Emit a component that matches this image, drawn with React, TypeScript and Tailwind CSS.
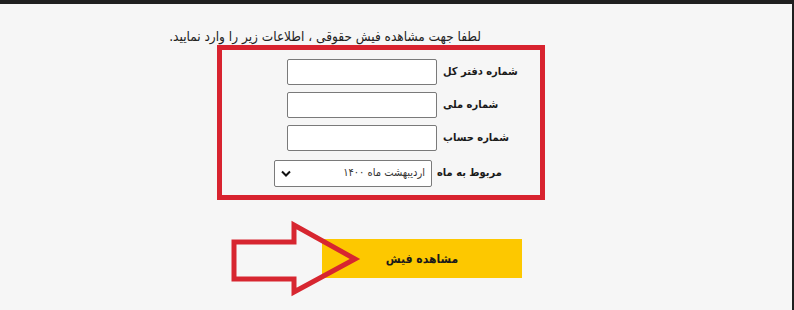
import React from "react";

const font = { fontFamily: '"DejaVu Sans Condensed", "DejaVu Sans", Tahoma, sans-serif' };

function Field({ label }: { label: string }) {
  return (
    <div className="flex items-center">
      <input
        type="text"
        className="ml-[65px] w-[150px] h-[26px] bg-white border border-[#7a7a7a] rounded-[2px] outline-none"
      />
      <span dir="rtl" className="ml-[6px] text-[11px] font-bold text-[#1a1a1a]">
        {label}
      </span>
    </div>
  );
}

function Arrow() {
  return (
    <svg
      className="absolute left-[228px] top-[215px]"
      width="134"
      height="80"
      viewBox="228 215 134 80"
      fill="none"
    >
      <path
        d="M234 238 L294 238 L294 221 L355 255 L294 288 L294 275 L234 275 Z"
        stroke="#d72630"
        strokeWidth="5"
        strokeLinejoin="miter"
      />
    </svg>
  );
}

export default function App() {
  return (
    <div
      className="relative h-[310px] w-full bg-[#f6f6f6] border-t-4 border-r-2 border-[#1f1f1f] overflow-hidden"
      style={font}
    >
      <p dir="rtl" className="w-[481px] pt-[23px] text-[13.5px] leading-[18px] text-[#222]">
        لطفا جهت مشاهده فیش حقوقی ، اطلاعات زیر را وارد نمایید.
      </p>

      <div className="ml-[217px] w-[328px] h-[155px] border-[5px] border-[#d8232f] pt-[9px] flex flex-col gap-[7px]">
        <Field label="شماره دفتر کل" />
        <Field label="شماره ملی" />
        <Field label="شماره حساب" />
        <div className="flex items-center mt-[2px]">
          <div className="ml-[52px] w-[158px] h-[27px] bg-white border border-[#7a7a7a] rounded-[2px] flex items-center justify-between px-[6px]">
            <svg width="10" height="7" viewBox="0 0 10 7">
              <path d="M1 1.5 L5 5.5 L9 1.5" stroke="#111" strokeWidth="2" fill="none" />
            </svg>
            <span dir="rtl" className="text-[11px] text-[#333]">
              اردیبهشت ماه ۱۴۰۰
            </span>
          </div>
          <span dir="rtl" className="ml-[5px] text-[11px] font-bold text-[#1a1a1a]">
            مربوط به ماه
          </span>
        </div>
      </div>

      <div className="ml-[322px] mt-[39px] w-[200px] h-[39px] bg-[#fdc800] flex items-center justify-center">
        <span dir="rtl" className="text-[12px] font-bold text-[#1a1a1a]">
          مشاهده فیش
        </span>
      </div>

      <Arrow />
    </div>
  );
}
